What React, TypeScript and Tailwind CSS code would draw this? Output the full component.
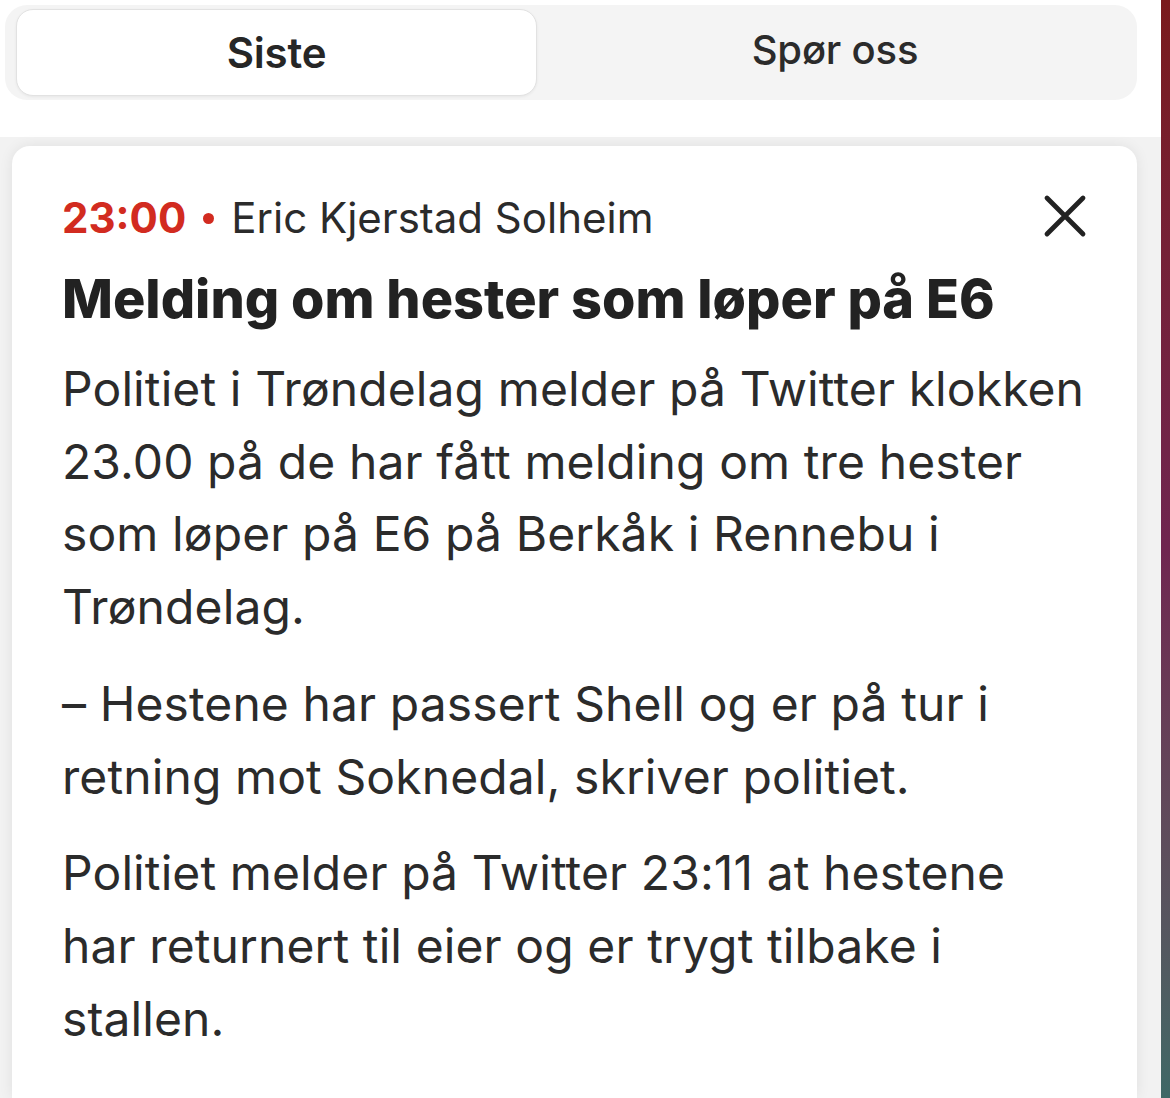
const paragraphs = [
  'Politiet i Trøndelag melder på Twitter klokken 23.00 på de har fått melding om tre hester som løper på E6 på Berkåk i Rennebu i Trøndelag.',
  '– Hestene har passert Shell og er på tur i retning mot Soknedal, skriver politiet.',
  'Politiet melder på Twitter 23:11 at hestene har returnert til eier og er trygt tilbake i stallen.',
]

function CloseIcon() {
  return (
    <svg viewBox="0 0 44 44" className="h-[44px] w-[44px] text-[#222]" fill="none" stroke="currentColor" strokeWidth={4.8} strokeLinecap="round">
      <path d="M4 4 L40 40 M40 4 L4 40" />
    </svg>
  )
}

export default function App() {
  return (
    <div className="flex w-[1170px] h-[1098px] overflow-hidden bg-white font-['Inter','Noto_Sans',sans-serif]">
      <div className="flex flex-col flex-1 min-w-0">
        {/* Tabs */}
        <div className="bg-white pt-[5px] pl-[5px] pr-[24px] pb-[37px]">
          <div className="flex items-stretch h-[95px] rounded-[22px] bg-[#f4f4f4] pl-[11px] pr-[4px] pt-[4px] pb-[4px]">
            <div className="flex w-[521px] items-center justify-center rounded-[17px] border border-[#e2e2e2] bg-white shadow-[0_1px_3px_rgba(0,0,0,0.06)]">
              <span className="text-[42px] font-semibold text-[#262626] tracking-[-0.2px]">Siste</span>
            </div>
            <div className="flex flex-1 items-center justify-center pb-[6px]">
              <span className="text-[40px] font-medium text-[#2b2b2b] tracking-[-0.2px]">Spør oss</span>
            </div>
          </div>
        </div>

        {/* Feed */}
        <div className="flex-1 bg-[#f2f2f2] pt-[9px] pl-[12px] pr-[24px]">
          <div className="h-full rounded-t-[18px] bg-white shadow-[0_0_14px_rgba(0,0,0,0.08)] pl-[50px] pr-[52px] pt-[44px]">
            <div className="flex items-start justify-between">
              <div className="flex items-center text-[42px] leading-[56px]">
                <span className="font-bold text-[#d22b20]">23:00</span>
                <span className="ml-[17px] mr-[17px] h-[11px] w-[11px] rounded-full bg-[#d22b20]" />
                <span className="text-[#2b2b2b]">Eric Kjerstad Solheim</span>
              </div>
              <div className="mt-[4px] mr-[-2px]">
                <CloseIcon />
              </div>
            </div>
            <h1 className="mt-[21px] text-[54px] leading-[64px] font-extrabold text-[#222]">
              Melding om hester som løper på E6
            </h1>
            <div className="mt-[22px] flex flex-col gap-[24px]">
              {paragraphs.map((p) => (
                <p key={p} className="text-[48px] leading-[72.7px] text-[#2b2b2b] tracking-[0.1px]">
                  {p}
                </p>
              ))}
            </div>
          </div>
        </div>
      </div>

      {/* Window edge */}
      <div className="w-[9px] bg-gradient-to-b from-[#7a1a1c] via-[#6f2550] to-[#3e6866]" />
    </div>
  )
}
